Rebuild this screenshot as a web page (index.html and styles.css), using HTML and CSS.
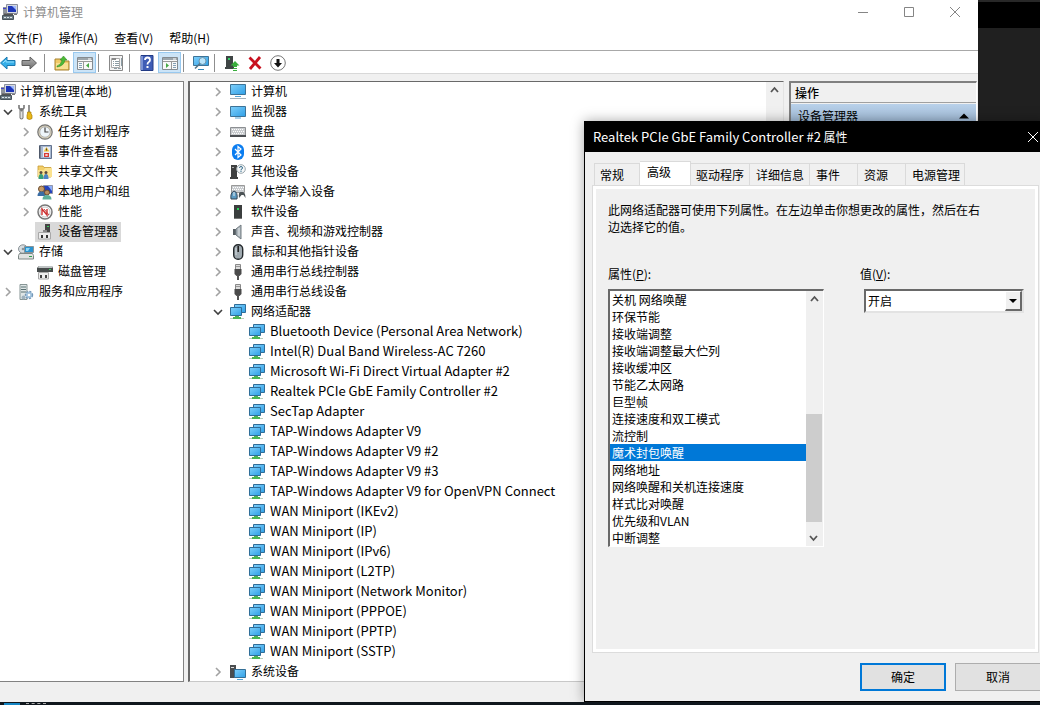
FILE: index.html
```html
<!DOCTYPE html>
<html lang="zh-CN">
<head>
<meta charset="utf-8">
<title>计算机管理</title>
<link rel="stylesheet" href="styles.css">
</head>
<body>
<svg class="defs" aria-hidden="true">
  <defs>
    <linearGradient id="blue" x1="0" y1="0" x2="1" y2="1"><stop offset="0" stop-color="#7fd0fb"/><stop offset="1" stop-color="#2f9fe6"/></linearGradient>
    <linearGradient id="grey" x1="0" y1="0" x2="0" y2="1"><stop offset="0" stop-color="#b5b5b5"/><stop offset="1" stop-color="#6f6f6f"/></linearGradient>
  </defs>
  <symbol id="right" viewBox="0 0 16 16"><path d="M6 4l4 4-4 4" fill="none" stroke="#a2a2a2" stroke-width="1.6"/></symbol>
  <symbol id="down" viewBox="0 0 16 16"><path d="M4 6l4 4 4-4" fill="none" stroke="#404040" stroke-width="1.6"/></symbol>
  <symbol id="up" viewBox="0 0 16 16"><path d="M5 10l3.500-4L12 10" fill="none" stroke="#555" stroke-width="1.8"/></symbol>
  <symbol id="mgmt" viewBox="0 0 16 16"><path d="M4.500.5h11v9h-11z" fill="#d4d8e0" stroke="#8a8f9c"/><path d="M6 2h8v6H6z" fill="#1d36b8"/><path d="M10 2h4v4z" fill="#9db8ff"/><path d="M1 3h3v8H1z" fill="#8f949c"/><path d="M1 4h3v1H1z" fill="#44c"/><path d="M2 9.500h9v1.500h-9z" fill="#555"/><path d="M.5 11.500h11v4H.5z" fill="#6e7d86" stroke="#46525a"/><path d="M2 13h2v1H2zM5 13h2v1H5zM8 13h2v1H8z" fill="#dce6ea"/><path d="M12 10h3v1h-3z" fill="#777"/></symbol>
  <symbol id="tools" viewBox="0 0 16 16"><path d="M3.500 6v7.500" stroke="#777" stroke-width="4" stroke-linecap="round"/><path d="M3.500 6v7.500" stroke="#e2e2e2" stroke-width="2" stroke-linecap="round"/><path d="M1 1v3l2.500 2.500L6 4V1" fill="none" stroke="#777" stroke-width="1.6"/><path d="M11 1v7" stroke="#888" stroke-width="1.8"/><path d="M9.500 8h3.500v2l1 1v3.500q-2.500 2-5 0V11l.5-1z" fill="#e9b818" stroke="#a97d08" stroke-width=".7"/></symbol>
  <symbol id="clock" viewBox="0 0 16 16"><circle cx="8" cy="8" r="7.200" fill="#d8d0b8" stroke="#757575" stroke-width="1.200"/><circle cx="8" cy="8" r="5.200" fill="#eef5fa" stroke="#aaa" stroke-width=".8"/><path d="M8 3.500V8h3.500" fill="none" stroke="#444" stroke-width="1.200"/></symbol>
  <symbol id="event" viewBox="0 0 16 16"><path d="M2.500 1.500h12v13h-12z" fill="#a8b8d0" stroke="#62728e"/><path d="M2 3h2M2 5h2M2 7h2M2 9h2M2 11h2M2 13h2" stroke="#333" stroke-width=".8"/><path d="M6 3h7v10H6z" fill="#e8eef6"/><path d="M9.500 3l2.800 4.500H6.700z" fill="#f2c12e"/><path d="M9.500 4.500v2" stroke="#444"/><path d="M7 9h5v4H7z" fill="#d83a33"/><path d="M8.500 10l2 2m0-2l-2 2" stroke="#fff"/></symbol>
  <symbol id="share" viewBox="0 0 16 16"><path d="M1 4V2h5l1 1.500h7V13H1z" fill="#f3cf69" stroke="#c69a33" stroke-width=".8"/><path d="M8 4h7v9H1V6h6z" fill="#fbe28f"/><circle cx="4" cy="8.500" r="1.500" fill="#594b3e"/><circle cx="9" cy="8.500" r="1.500" fill="#594b3e"/><path d="M1.500 15q0-5 2.500-5t2.500 5z" fill="#36a07a"/><path d="M6.500 15q0-5 2.500-5t2.500 5z" fill="#4c83c4"/></symbol>
  <symbol id="users" viewBox="0 0 16 16"><path d="M6.500 1.500h9v8h-9z" fill="#2443bd" stroke="#9297aa"/><path d="M11 2h4v5z" fill="#8fb0fb"/><circle cx="4.500" cy="5" r="3" fill="#c69a68" stroke="#694c30"/><path d="M.5 12q0-4.500 4-4.500t4 4.500z" fill="#3a6da4"/><circle cx="10" cy="8.500" r="2.500" fill="#b98e5e" stroke="#694c30"/><path d="M5.500 15.500q0-4.500 4.500-4.500t4.500 4.500z" fill="#5daf99"/></symbol>
  <symbol id="perf" viewBox="0 0 16 16"><circle cx="8" cy="8" r="7" fill="#fff" stroke="#777" stroke-width="1.500"/><circle cx="8" cy="8" r="5" fill="none" stroke="#aaa" stroke-width=".7"/><path d="M5 11V5l5 6V5" fill="none" stroke="#cf2f2f" stroke-width="1.400"/><path d="M7 5l5 6" stroke="#be4545"/></symbol>
  <symbol id="device" viewBox="0 0 16 16"><path d="M8 0h5v8H8z" fill="#454545"/><path d="M10 2h2v1h-2z" fill="#39d05c"/><path d="M6 6h4v3H6z" fill="#888"/><path d="M1.500 8.500h12v6.500h-12z" fill="#ececec" stroke="#a8a8a8"/><path d="M4 11h2v3H4zM9 11h2v3H9z" fill="#333"/></symbol>
  <symbol id="storage" viewBox="0 0 16 16"><ellipse cx="5" cy="5" rx="4.500" ry="4.200" fill="#d7dde0" stroke="#8b9398"/><circle cx="5" cy="5" r="1.300" fill="#8b9398"/><path d="M6.500 2.500h9v6h-9z" fill="#2a93d0" stroke="#8a9498"/><path d="M8 4h4l-2 3H8z" fill="#8bd7fa"/><path d="M1.500 9.500h13l1 2v3.500H.5v-3.500z" fill="#e0e2e1" stroke="#7e8886"/><path d="M11 12h3v1h-3z" fill="#2e9f4c"/></symbol>
  <symbol id="disk" viewBox="0 0 16 16"><path d="M2 2h13l1 2v4H0V4z" fill="#464b4b"/><path d="M2 2h13l.5 2H1z" fill="#bfc4c4"/><path d="M12 5h2v1h-2z" fill="#42d063"/><path d="M1.500 8.500h10v6.500h-10z" fill="#eee" stroke="#aaa"/><path d="M3 11h2v3H3zM8 11h2v3H8z" fill="#444"/></symbol>
  <symbol id="service" viewBox="0 0 16 16"><path d="M2 .5h7v15H2z" fill="#dfe6e6" stroke="#879595"/><path d="M3 3h5M3 5.500h5M3 8h5" stroke="#597072"/><circle cx="11" cy="11" r="3.200" fill="#d5e7f5" stroke="#7397b7" stroke-width="2" stroke-dasharray="2 1"/><circle cx="11" cy="11" r="3" fill="#9fc0db"/><circle cx="11" cy="11" r="1.300" fill="#fff"/><circle cx="5.500" cy="13.500" r="2" fill="#9fb2be"/></symbol>
  <symbol id="computer" viewBox="0 0 16 16"><path d="M.5.5h15v10H.5z" fill="url(#blue)" stroke="#3d7397"/><path d="M5 12h6v1H5z" fill="#53a5d7"/><path d="M0 14h16v1H0z" fill="#a5b1b9"/></symbol>
  <symbol id="monitor" viewBox="0 0 16 16"><path d="M.5 2.500h15v10H.5z" fill="url(#blue)" stroke="#3d7397"/><path d="M5 13.500h6v1H5z" fill="#53a5d7"/></symbol>
  <symbol id="keyboard" viewBox="0 0 16 16"><path d="M.5 3.500h15v9H.5z" fill="#c9cccf" stroke="#8c8f92"/><path d="M2 5.500h12M3 7.500h11M2 9.500h12" stroke="#fff" stroke-dasharray="1 1"/><path d="M0 11h16v2H0z" fill="#4b4f53"/></symbol>
  <symbol id="bt" viewBox="0 0 16 16"><rect x="2" width="12" height="16" rx="6" fill="#0b7df0"/><path d="M5 5l6 6-3 2.500v-11L11 5l-6 6" fill="none" stroke="#fff" stroke-width="1.200"/></symbol>
  <symbol id="other" viewBox="0 0 16 16"><path d="M1 1h6v12h1v2H0v-2h1z" fill="#3f4141"/><path d="M2 3h2v1H2z" fill="#aaa"/><circle cx="11" cy="5" r="4.300" fill="#f6f8f9" stroke="#9aa7ad"/><path d="M9.500 4q0-1.500 1.500-1.500T12.500 4q0 1-1.500 1.500v1M11 7v1" fill="none" stroke="#356c8c"/></symbol>
  <symbol id="hid" viewBox="0 0 16 16"><path d="M1.500 1.500h13v7h-13z" fill="#c9cccf" stroke="#999"/><path d="M3 3.500h11M2 5.500h12" stroke="#fff" stroke-dasharray="1 1"/><path d="M1 15q-1-6 3-8 4 1 3 8z" fill="#5b9ac2" stroke="#345"/><path d="M4 8v4" stroke="#e8eef2"/><path d="M9 14q-1-7 2.500-6 4-1 4 6l-2-3h-2z" fill="#4c5356"/></symbol>
  <symbol id="software" viewBox="0 0 16 16"><path d="M4 1h8v13H4z" fill="#3b3e3e"/><path d="M7 4h2v2H7z" fill="#2bd35a"/><path d="M4 14h8v1H4z" fill="#777"/></symbol>
  <symbol id="sound" viewBox="0 0 16 16"><path d="M3 5h3v6H3z" fill="#555c61"/><path d="M6 5l5-4v14l-5-4z" fill="#abb4ba" stroke="#727c82"/><path d="M9 4v8" stroke="#e4e9eb"/></symbol>
  <symbol id="mouse" viewBox="0 0 16 16"><rect x="3.700" y=".7" width="9" height="14.500" rx="4.300" fill="#9fa9af" stroke="#24292c" stroke-width="1.400"/><path d="M8.200 2v6" stroke="#222" stroke-width="1.600"/><path d="M6 4v7" stroke="#d5dde1"/></symbol>
  <symbol id="usb" viewBox="0 0 16 16"><path d="M5.500.5h5v5h-5z" fill="#ddd" stroke="#888"/><path d="M6.500 2h1v1h-1zM8.500 2h1v1h-1z" fill="#555"/><path d="M4.500 5h7v5l-2 2h-3l-2-2z" fill="#4b4b4b"/><path d="M8 11v5" stroke="#555" stroke-width="2"/></symbol>
  <symbol id="net" viewBox="0 0 16 16"><path d="M4.500.5h11v8h-11z" fill="url(#blue)" stroke="#2f6d98"/><path d="M.5 3.500h11v8H.5z" fill="url(#blue)" stroke="#2f6d98"/><path d="M5 12h4v1h2v2H3v-2h2z" fill="#4bb454"/><path d="M0 14h3v1H0zM11 14h3v1h-3z" fill="#b8d0bb"/></symbol>
  <symbol id="system" viewBox="0 0 16 16"><path d="M0 1h6v13H0z" fill="#4a4d4f"/><path d="M1 3h3v1H1z" fill="#ddd"/><path d="M4.500 5.500h11v8h-11z" fill="url(#blue)" stroke="#346f96"/><path d="M7 15h6v1H7z" fill="#53a5d7"/></symbol>
  <symbol id="back" viewBox="0 0 16 16"><path d="M.5 8l6.500-6v3.500h8v5H7V14z" fill="#35aee8" stroke="#1977ae"/><path d="M3 8l3-3v2h8" fill="none" stroke="#94ddfb"/></symbol>
  <symbol id="forward" viewBox="0 0 16 16"><path d="M15.500 8L9 2v3.500H1v5h8V14z" fill="url(#grey)" stroke="#5e5e5e"/></symbol>
  <symbol id="folderup" viewBox="0 0 16 16"><path d="M1 4h6l1 2h7v9H1z" fill="#f2ca67" stroke="#a7822f"/><path d="M2 8h12v6H2z" fill="#f9e092"/><path d="M3 11q4-1 5-6H6l3.500-4L13 5h-2q-1 6-8 7z" fill="#4cb837" stroke="#2d8924" stroke-width=".5"/></symbol>
  <symbol id="paneleft" viewBox="0 0 16 16"><path d="M.5 2.500h15v12H.5z" fill="#f8f8f8" stroke="#858b90"/><path d="M1 3h14v2H1z" fill="#9ca5ab"/><path d="M11 4h3" stroke="#fff"/><path d="M1 6.500h14M6.500 7v7" stroke="#999"/><path d="M2 8.500h3M2 10.500h3M2 12.500h3" stroke="#84a0b5"/><path d="M12 8v5l-3-2.500z" fill="#45a843"/></symbol>
  <symbol id="paneright" viewBox="0 0 16 16"><path d="M.5 2.500h15v12H.5z" fill="#f8f8f8" stroke="#858b90"/><path d="M1 3h14v2H1z" fill="#9ca5ab"/><path d="M11 4h3" stroke="#fff"/><path d="M1 6.500h14M9.500 7v7" stroke="#999"/><path d="M11 8.500h3M11 10.500h3M11 12.500h3" stroke="#84a0b5"/><path d="M4 8v5l3-2.500z" fill="#45a843"/></symbol>
  <symbol id="props" viewBox="0 0 16 16"><path d="M1.500.5h13v15h-13z" fill="#f4f4f4" stroke="#888"/><path d="M3.500 3.500h8v9h-8z" fill="#fff" stroke="#aaa"/><path d="M4 3h4v2H4z" fill="#888"/><path d="M5 6.500h1M7 6.500h4M5 8.500h1M7 8.500h4M5 10.500h1M7 10.500h4M6 13.500h3M10 13.500h3M13.500 3v8" stroke="#8c9da5"/></symbol>
  <symbol id="help" viewBox="0 0 16 16"><path d="M2 .5h12v15H2z" fill="#3e5cb5" stroke="#223b85"/><path d="M2 1h2v14H2z" fill="#7890d3"/><path d="M6 5q0-2.500 2.500-2.500T11 5q0 1.500-1.500 2.300-1 .5-1 2.200" fill="none" stroke="#fff" stroke-width="1.800"/><path d="M7.500 11h2v2h-2z" fill="#fff"/></symbol>
  <symbol id="scan" viewBox="0 0 16 16"><path d="M.5 1.500h15v9H.5z" fill="url(#blue)" stroke="#3d7397"/><path d="M5 14h6v1H5z" fill="#3289bb"/><circle cx="9.500" cy="6" r="3.500" fill="#b9e4fa" stroke="#7095aa"/><path d="M7 8.500l-5 5" stroke="#53758a" stroke-width="1.600"/></symbol>
  <symbol id="update" viewBox="0 0 16 16"><path d="M2 1h7v11h1v2H1v-2h1z" fill="#3f4545"/><path d="M4 3h2v2H4z" fill="#34d269"/><path d="M11 6l4.500 4.500H13V12H9v-1.500H6.500zM9 13h4v1H9zM9 15h4v1H9z" fill="#39ad3d"/></symbol>
  <symbol id="remove" viewBox="0 0 16 16"><path d="M2.500 2.500l11 11M13 2L3 14" stroke="#c8101e" stroke-width="2.800"/></symbol>
  <symbol id="disable" viewBox="0 0 16 16"><circle cx="8" cy="8" r="7.300" fill="#fff" stroke="#777"/><path d="M6.500 4h3v4H12l-4 4.500L4 8h2.500z" fill="#111"/></symbol>
</svg>

<main class="desktop">
  <div class="desktop-bar"></div>
  <section class="window" aria-label="计算机管理">
    <header class="titlebar">
      <svg class="icon"><use href="#mgmt"/></svg>
      <h1>计算机管理</h1>
      <button class="caption" aria-label="最小化"><svg viewBox="0 0 12 12"><path d="M1 6.500h10"/></svg></button>
      <button class="caption" aria-label="最大化"><svg viewBox="0 0 12 12"><path d="M1.500 1.500h9v9h-9z"/></svg></button>
      <button class="caption" aria-label="关闭"><svg viewBox="0 0 12 12"><path d="M1 1l10 10M11 1L1 11"/></svg></button>
    </header>
    <nav class="menu">
      <button>文件(F)</button><button>操作(A)</button><button>查看(V)</button><button>帮助(H)</button>
    </nav>
    <div class="toolbar">
      <button aria-label="后退"><svg class="icon"><use href="#back"/></svg></button>
      <button aria-label="前进"><svg class="icon"><use href="#forward"/></svg></button>
      <i></i>
      <button aria-label="向上"><svg class="icon"><use href="#folderup"/></svg></button>
      <button class="on" aria-label="显示控制台树"><svg class="icon"><use href="#paneleft"/></svg></button>
      <i></i>
      <button aria-label="属性"><svg class="icon"><use href="#props"/></svg></button>
      <i></i>
      <button aria-label="帮助"><svg class="icon"><use href="#help"/></svg></button>
      <button class="on" aria-label="显示操作窗格"><svg class="icon"><use href="#paneright"/></svg></button>
      <i></i>
      <button aria-label="扫描硬件"><svg class="icon"><use href="#scan"/></svg></button>
      <i></i>
      <button aria-label="更新驱动"><svg class="icon"><use href="#update"/></svg></button>
      <button aria-label="卸载"><svg class="icon"><use href="#remove"/></svg></button>
      <button aria-label="禁用"><svg class="icon"><use href="#disable"/></svg></button>
    </div>
    <div class="panes">
      <ul class="tree console">
        <li class="root"><svg class="icon"><use href="#mgmt"/></svg><span>计算机管理(本地)</span></li>
        <li><svg class="icon"><use href="#down"/></svg><svg class="icon"><use href="#tools"/></svg><span>系统工具</span></li>
        <li class="sub"><svg class="icon"><use href="#right"/></svg><svg class="icon"><use href="#clock"/></svg><span>任务计划程序</span></li>
        <li class="sub"><svg class="icon"><use href="#right"/></svg><svg class="icon"><use href="#event"/></svg><span>事件查看器</span></li>
        <li class="sub"><svg class="icon"><use href="#right"/></svg><svg class="icon"><use href="#share"/></svg><span>共享文件夹</span></li>
        <li class="sub"><svg class="icon"><use href="#right"/></svg><svg class="icon"><use href="#users"/></svg><span>本地用户和组</span></li>
        <li class="sub"><svg class="icon"><use href="#right"/></svg><svg class="icon"><use href="#perf"/></svg><span>性能</span></li>
        <li class="leaf"><div class="selected"><svg class="icon"><use href="#device"/></svg><span>设备管理器</span></div></li>
        <li><svg class="icon"><use href="#down"/></svg><svg class="icon"><use href="#storage"/></svg><span>存储</span></li>
        <li class="leaf"><div class="plain"><svg class="icon"><use href="#disk"/></svg><span>磁盘管理</span></div></li>
        <li><svg class="icon"><use href="#right"/></svg><svg class="icon"><use href="#service"/></svg><span>服务和应用程序</span></li>
      </ul>
      <div class="devices">
        <ul class="tree">
          <li><svg class="icon"><use href="#right"/></svg><svg class="icon"><use href="#computer"/></svg><span>计算机</span></li>
          <li><svg class="icon"><use href="#right"/></svg><svg class="icon"><use href="#monitor"/></svg><span>监视器</span></li>
          <li><svg class="icon"><use href="#right"/></svg><svg class="icon"><use href="#keyboard"/></svg><span>键盘</span></li>
          <li><svg class="icon"><use href="#right"/></svg><svg class="icon"><use href="#bt"/></svg><span>蓝牙</span></li>
          <li><svg class="icon"><use href="#right"/></svg><svg class="icon"><use href="#other"/></svg><span>其他设备</span></li>
          <li><svg class="icon"><use href="#right"/></svg><svg class="icon"><use href="#hid"/></svg><span>人体学输入设备</span></li>
          <li><svg class="icon"><use href="#right"/></svg><svg class="icon"><use href="#software"/></svg><span>软件设备</span></li>
          <li><svg class="icon"><use href="#right"/></svg><svg class="icon"><use href="#sound"/></svg><span>声音、视频和游戏控制器</span></li>
          <li><svg class="icon"><use href="#right"/></svg><svg class="icon"><use href="#mouse"/></svg><span>鼠标和其他指针设备</span></li>
          <li><svg class="icon"><use href="#right"/></svg><svg class="icon"><use href="#usb"/></svg><span>通用串行总线控制器</span></li>
          <li><svg class="icon"><use href="#right"/></svg><svg class="icon"><use href="#usb"/></svg><span>通用串行总线设备</span></li>
          <li><svg class="icon"><use href="#down"/></svg><svg class="icon"><use href="#net"/></svg><span>网络适配器</span></li>
          <li class="adapter"><svg class="icon"><use href="#net"/></svg><span>Bluetooth Device (Personal Area Network)</span></li>
          <li class="adapter"><svg class="icon"><use href="#net"/></svg><span>Intel(R) Dual Band Wireless-AC 7260</span></li>
          <li class="adapter"><svg class="icon"><use href="#net"/></svg><span>Microsoft Wi-Fi Direct Virtual Adapter #2</span></li>
          <li class="adapter"><svg class="icon"><use href="#net"/></svg><span>Realtek PCIe GbE Family Controller #2</span></li>
          <li class="adapter"><svg class="icon"><use href="#net"/></svg><span>SecTap Adapter</span></li>
          <li class="adapter"><svg class="icon"><use href="#net"/></svg><span>TAP-Windows Adapter V9</span></li>
          <li class="adapter"><svg class="icon"><use href="#net"/></svg><span>TAP-Windows Adapter V9 #2</span></li>
          <li class="adapter"><svg class="icon"><use href="#net"/></svg><span>TAP-Windows Adapter V9 #3</span></li>
          <li class="adapter"><svg class="icon"><use href="#net"/></svg><span>TAP-Windows Adapter V9 for OpenVPN Connect</span></li>
          <li class="adapter"><svg class="icon"><use href="#net"/></svg><span>WAN Miniport (IKEv2)</span></li>
          <li class="adapter"><svg class="icon"><use href="#net"/></svg><span>WAN Miniport (IP)</span></li>
          <li class="adapter"><svg class="icon"><use href="#net"/></svg><span>WAN Miniport (IPv6)</span></li>
          <li class="adapter"><svg class="icon"><use href="#net"/></svg><span>WAN Miniport (L2TP)</span></li>
          <li class="adapter"><svg class="icon"><use href="#net"/></svg><span>WAN Miniport (Network Monitor)</span></li>
          <li class="adapter"><svg class="icon"><use href="#net"/></svg><span>WAN Miniport (PPPOE)</span></li>
          <li class="adapter"><svg class="icon"><use href="#net"/></svg><span>WAN Miniport (PPTP)</span></li>
          <li class="adapter"><svg class="icon"><use href="#net"/></svg><span>WAN Miniport (SSTP)</span></li>
          <li><svg class="icon"><use href="#right"/></svg><svg class="icon"><use href="#system"/></svg><span>系统设备</span></li>
        </ul>
        <div class="scroll"><svg class="icon"><use href="#up"/></svg></div>
      </div>
      <aside class="actions">
        <h2>操作</h2>
        <div class="group"><span>设备管理器</span><svg viewBox="0 0 10 6"><path d="M0 5.500L5 .5l5 5z"/></svg></div>
      </aside>
    </div>
    <footer class="status"></footer>
  </section>

  <section class="dialog" role="dialog" aria-labelledby="dlg-title">
    <header class="dialog-title">
      <h2 id="dlg-title"><span>Realtek PCIe GbE Family Controller #2</span> 属性</h2>
      <button aria-label="关闭"><svg viewBox="0 0 12 12"><path d="M1 1l10 10M11 1L1 11"/></svg></button>
    </header>
    <div class="dialog-body">
      <div class="tabs" role="tablist">
        <button role="tab">常规</button><button role="tab" aria-selected="true">高级</button><button role="tab">驱动程序</button><button role="tab">详细信息</button><button role="tab">事件</button><button role="tab">资源</button><button role="tab">电源管理</button>
      </div>
      <div class="page">
        <p>此网络适配器可使用下列属性。在左边单击你想更改的属性，然后在右边选择它的值。</p>
        <div class="fields">
          <div class="field">
            <label for="prop">属性(<u>P</u>):</label>
            <div class="listbox">
              <select id="prop" size="15">
                <option>关机 网络唤醒</option>
                <option>环保节能</option>
                <option>接收端调整</option>
                <option>接收端调整最大伫列</option>
                <option>接收缓冲区</option>
                <option>节能乙太网路</option>
                <option>巨型帧</option>
                <option>连接速度和双工模式</option>
                <option>流控制</option>
                <option selected>魔术封包唤醒</option>
                <option>网络地址</option>
                <option>网络唤醒和关机连接速度</option>
                <option>样式比对唤醒</option>
                <option>优先级和VLAN</option>
                <option>中断调整</option>
              </select>
              <div class="scroll">
                <svg class="icon"><use href="#up"/></svg>
                <div class="track"><div class="thumb"></div></div>
                <svg class="icon flip"><use href="#up"/></svg>
              </div>
            </div>
          </div>
          <div class="field">
            <label for="value">值(<u>V</u>):</label>
            <div class="combo">
              <select id="value"><option>开启</option></select>
              <div class="drop"><svg viewBox="0 0 8 4"><path d="M0 0h8L4 4z"/></svg></div>
            </div>
          </div>
        </div>
      </div>
      <div class="buttons">
        <button class="default">确定</button>
        <button>取消</button>
      </div>
    </div>
  </section>
  <footer class="taskbar"><i></i><b></b></footer>
</main>
</body>
</html>
```
FILE: styles.css
```css
* { box-sizing: border-box; }
html, body { height: 100%; }
body {
  margin: 0;
  overflow: hidden;
  font: 12px/20px "Noto Sans CJK SC", sans-serif;
  color: #000;
}
button, select {
  font: inherit;
  color: inherit;
  margin: 0;
  padding: 0;
  border: 0;
  border-radius: 0;
  background: none;
}
h1, h2, p, ul { margin: 0; padding: 0; font-size: 12px; font-weight: 400; }
.defs { position: absolute; width: 0; height: 0; }
.icon { width: 16px; height: 16px; flex: none; display: block; }

.desktop {
  position: relative;
  height: 100%;
  overflow: hidden;
  background: #202020;
}
.desktop-bar { height: 28px; background: #000; border-top: 2px solid #282828; }

/* main window */
.window {
  position: absolute;
  inset: 0 62px 3px 0;
  display: flex;
  flex-direction: column;
  background: #f0f0f0;
}
.titlebar {
  display: flex;
  align-items: center;
  height: 23px;
  padding-left: 2px;
  background: #fff;
}
.titlebar h1 { flex: 1; padding-left: 5px; color: #8d8d8d; }
.caption { width: 46px; height: 23px; display: flex; align-items: center; justify-content: center; }
.caption svg { width: 12px; height: 12px; fill: none; stroke: #858585; }
.menu {
  display: flex;
  gap: 16px;
  height: 28px;
  padding: 5px 4px 2px;
  background: #fff;
  border-bottom: 1px solid #a8a8a8;
}
.toolbar {
  display: flex;
  align-items: center;
  height: 23px;
  padding-top: 1px;
  background: #fff;
  border-bottom: 1px solid #d8d8d8;
}
.toolbar button {
  width: 23px;
  height: 21px;
  display: flex;
  align-items: center;
  justify-content: center;
}
.toolbar button:first-child { width: 16px; }
.toolbar button:nth-child(2) { width: 26px; }
.toolbar .on { background: #cce4f7; border: 1px solid #99c9ef; }
.toolbar i { width: 1px; height: 18px; margin: 0 5px 0 2px; background: #8f8f8f; }

.panes {
  flex: 1;
  min-height: 0;
  display: grid;
  grid-template-columns: 184px 1fr 188px;
  column-gap: 4px;
  padding: 7px 1px 0 0;
}
.tree { list-style: none; }
.tree li { display: flex; align-items: center; height: 20px; white-space: nowrap; }
.tree span { padding: 0 0 2px 5px; }
.console {
  background: #fff;
  border: solid #828282;
  border-width: 1px 1px 1px 0;
  overflow: hidden;
}
.console .root span { padding-left: 4px; }
.console li > .icon:first-child + .icon { margin-left: 2px; }
.console .sub { padding-left: 18px; }
.console .sub > .icon:first-child + .icon { margin-left: 3px; }
.console .leaf { padding-left: 35px; }
.selected, .plain { display: flex; align-items: center; height: 20px; padding: 0 3px 0 2px; }
.selected { background: #d9d9d9; }
.devices {
  display: flex;
  min-width: 0;
  overflow: hidden;
  margin-right: 1px;
  background: #fff;
  border: solid #696969;
  border-width: 1px 1px 1px 2px;
  border-right-color: #e3e3e3;
  border-bottom-color: #c8c8c8;
}
.devices .tree { flex: 1; padding-left: 20px; }
.devices li .icon + .icon { margin-left: 4px; }
.devices .adapter { padding-left: 39px; font-size: 13px; }
.scroll { width: 17px; background: #f0f0f0; }
.actions { border: solid #808080; border-width: 2px 1px 0 2px; border-right-color: #fff; min-width: 0; }
.actions h2 {
  height: 20px;
  padding-left: 4px;
  font-weight: 500;
  border-bottom: 1px solid #a0a0a0;
}
.group {
  display: flex;
  align-items: center;
  justify-content: space-between;
  height: 24px;
  margin-top: 1px;
  padding: 0 7px;
  background: linear-gradient(#b9d1ea, #99b4d1);
}
.group svg { width: 10px; height: 6px; }
.status { height: 20px; }

/* adapter properties */
.dialog {
  position: absolute;
  inset: 121px -8px 3px 584px;
  display: flex;
  flex-direction: column;
  background: #f0f0f0;
  border: solid #000;
  border-width: 0 1px 1px;
  box-shadow: 0 0 12px rgba(0, 0, 0, .35);
}
.dialog-title {
  display: flex;
  align-items: center;
  justify-content: space-between;
  height: 31px;
  padding: 0 8px;
  background: #000;
  color: #fff;
}
.dialog-title span { font-size: 13px; }
.dialog-title svg { display: block; width: 12px; height: 12px; fill: none; stroke: #fff; }
.dialog-body { flex: 1; display: flex; flex-direction: column; padding: 9px 6px 10px 7px; }
.tabs { display: flex; align-items: flex-end; padding-left: 2px; height: 24px; flex: none; }
.tabs button {
  height: 22px;
  padding: 0 4px 0 6px;
  text-align: left;
  border: solid #dadada;
  border-width: 1px 1px 0 0;
}
.tabs button:first-child { width: 46px; padding-left: 5px; border-left-width: 1px; }
.tabs button:nth-child(2) { width: 51px; height: 24px; padding: 0 0 3px 7px; background: #fff; }
.tabs button:nth-child(3) { width: 59px; padding-left: 5px; }
.tabs button:nth-child(4) { width: 60px; }
.tabs button:nth-child(5), .tabs button:nth-child(6) { width: 48px; }
.tabs button:nth-child(7) { width: 59px; }
.page {
  flex: 1;
  margin-right: 2px;
  padding: 15px 12px;
  border: 1px solid #dcdcdc;
  box-shadow: inset 0 0 0 3px #fff;
}
.page p { max-width: 376px; padding-left: 3px; line-height: 17px; }
.fields { display: flex; gap: 36px; padding: 29px 0 0 3px; }
.field { display: flex; flex-direction: column; }
.field label { height: 25px; line-height: 20px; }
.listbox {
  display: flex;
  width: 216px;
  height: 258px;
  background: #fff;
  border: 2px solid #696969;
  border-width: 2px 1px 1px 2px;
  border-right-color: #fff;
  border-bottom-color: #fff;
}
.listbox select { flex: 1; overflow: hidden; outline: 0; scrollbar-width: none; }
.listbox option { height: 17px; min-height: 17px; padding: 0 2px; line-height: 16px; }
.listbox option:checked { background: #0078d7 linear-gradient(#0078d7, #0078d7); color: #fff; -webkit-text-fill-color: #fff; }
.listbox .scroll { display: flex; flex-direction: column; }
.track { flex: 1; display: flex; flex-direction: column; justify-content: flex-end; padding-bottom: 8px; }
.thumb { height: 108px; margin-right: 1px; background: #cdcdcd; }
.flip { transform: rotate(180deg); }
.combo {
  display: flex;
  width: 160px;
  height: 24px;
  margin-left: 4px;
  background: #fff;
  border: 2px solid #696969;
  border-right-color: #e3e3e3;
  border-bottom-color: #e3e3e3;
}
.combo select { flex: 1; appearance: none; padding-left: 2px; outline: 0; }
.drop {
  width: 17px;
  display: flex;
  align-items: center;
  justify-content: center;
  background: #f0f0f0;
  border: solid #fff;
  border-width: 1px 2px 2px 1px;
  border-right-color: #696969;
  border-bottom-color: #696969;
}
.drop svg { width: 8px; height: 4px; }
.buttons { display: flex; justify-content: flex-end; gap: 9px; padding-top: 10px; }
.buttons button { width: 86px; height: 28px; background: #e1e1e1; border: 1px solid #adadad; }
.buttons .default { border: 2px solid #0078d7; }

.taskbar {
  position: absolute;
  inset: auto 0 0;
  height: 3px;
  display: flex;
  gap: 6px;
  padding: 1px 0 0 4px;
  background: #10171d;
}
.taskbar i { width: 16px; background: #1586c4; }
.taskbar b { width: 20px; border-top: 1px dashed #aaa; }
```
